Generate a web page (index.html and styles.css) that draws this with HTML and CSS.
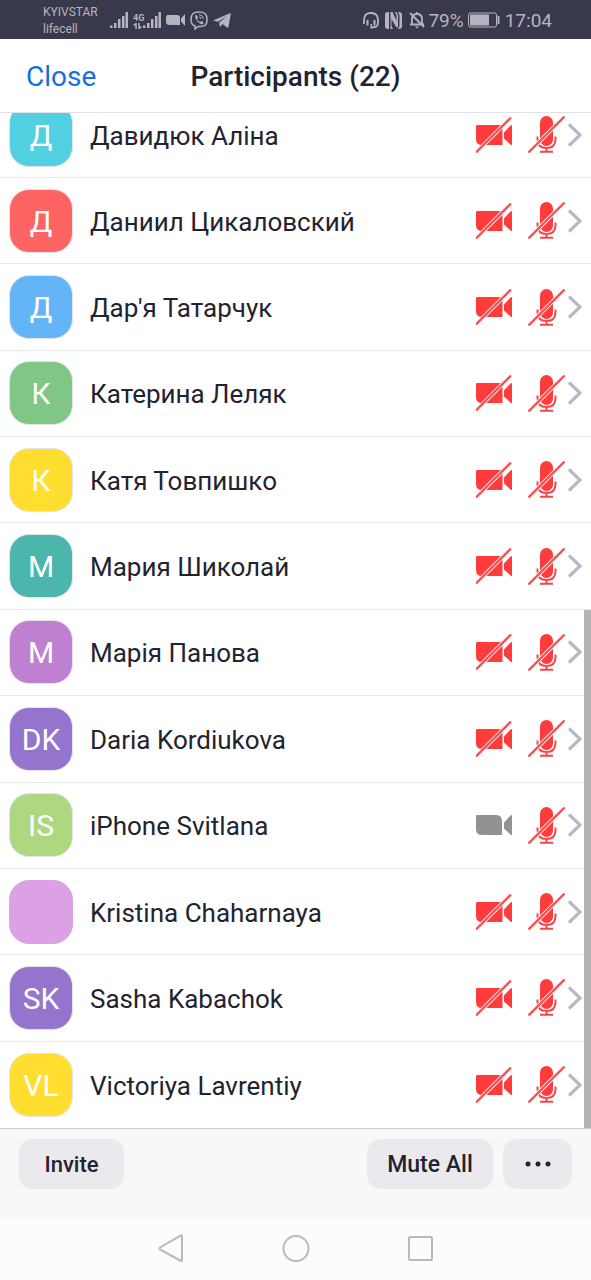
FILE: index.html
```html
<!DOCTYPE html>
<html lang="en">
<head>
<meta charset="utf-8">
<meta name="viewport" content="width=device-width, initial-scale=1">
<title>Participants</title>
<link rel="stylesheet" href="styles.css">
</head>
<body>
<svg class="sprite" aria-hidden="true">
  <symbol id="video-body" viewBox="0 0 36 36">
    <path d="M0 9Q0 8 1.500 8H20Q26 8 26 14V28H6Q0 28 0 22ZM28 15.500 34.500 8.500Q36 7.500 36 9V27.500Q36 29 34.500 27.500L28 21.500Z"/>
  </symbol>
  <symbol id="video-off" viewBox="0 0 36 36">
    <path d="M0 9Q0 8 1.500 8H26.500V28H6Q0 28 0 22ZM28 15.500 34.500 8.500Q36 7.500 36 9V27.500Q36 29 34.500 27.500L28 21.500Z"/>
    <path d="M0 35.500 35 .5" stroke="#ffe4e4" stroke-width="4"/>
    <path d="M0 35.500 35 .5" stroke="#ee4c50" stroke-width="2"/>
  </symbol>
  <symbol id="mic-off" viewBox="0 0 37 37">
    <rect x="12" y="0" width="13" height="30" rx="6.500"/>
    <path d="M9.500 20.500V23Q9.500 32 18.500 32T27.500 23V20.500M18.500 32V36M12 35.700H25" fill="none" stroke="#f2484a" stroke-width="2"/>
    <path d="M.5 36.500 36.500 .5" stroke="#ffe4e4" stroke-width="4"/>
    <path d="M.5 36.500 36.500 .5" stroke="#ee4c50" stroke-width="2"/>
  </symbol>
  <symbol id="chevron" viewBox="0 0 14 24">
    <path d="M1 1.500 12 12 1 22.500" fill="none" stroke="#b7b7c8" stroke-width="3.200"/>
  </symbol>
  <symbol id="signal" viewBox="0 0 18 18">
    <path d="M0 14.500h2.500v2.500H0ZM4 12h2.500v5H4ZM8 8h2.500v9H8ZM12 5h2.500v12h-2.500ZM15.500 1h2.500v16h-2.500Z"/>
  </symbol>
</svg>

<div class="screen">
  <div class="status">
    <div class="carriers"><span>KYIVSTAR</span><span>lifecell</span></div>
    <div class="status-icons">
      <svg class="signal" viewBox="0 0 18 18"><use href="#signal"/></svg>
      <div class="mobile">
        <div class="network"><span>4G</span>
          <svg viewBox="0 0 10 6"><path d="M3 6V.5L.5 2.500M6 0V5.500L8.500 3.500" fill="none" stroke="currentColor" stroke-width="1.500"/></svg>
        </div>
        <svg class="signal" viewBox="0 0 18 18"><use href="#signal"/></svg>
      </div>
      <svg class="camera" viewBox="0 0 19 12"><path d="M2 1H11Q14 1 14 4V11H4Q0 11 0 8V3Q0 1 2 1ZM15 4.500 19 0V12L15 7.500Z"/></svg>
      <svg class="viber" viewBox="0 0 18 19"><path d="M9 1C3 1 1 3 1 8.500 1 12 2 14 5 15V18L8 15.500C15 16 17 14 17 8.500S15 1 9 1Z" fill="none" stroke="currentColor" stroke-width="1.500"/><path d="M5 4.500 6.500 4 8 6.500 7 8Q8 10 10 11L11.500 10 13.500 11.500 13 13Q11 14 8 11T5 4.500Z"/><path d="M9 3.500Q13 4 13.500 8M9 6Q11 6 11 8" fill="none" stroke="currentColor"/></svg>
      <svg class="telegram" viewBox="0 0 18 15"><path d="M0 7.500 17 .3Q18 0 17.800 1L15.500 14Q15 15 14 14.500L9.500 11 7.500 13.500 6.500 13 6.300 9.500 14 3 5 8.800Z"/></svg>
    </div>
    <div class="status-right">
      <svg class="headset" viewBox="0 0 16 17"><path d="M1 12V8Q1 1 8 1T15 8V11Q15 15.500 9 15.500" fill="none" stroke="currentColor" stroke-width="1.800"/><path d="M3.500 8H5.500V13.500H3.500ZM10.500 8H12.500V13.500H10.500ZM7.500 12H9V16.500H7.500Z"/></svg>
      <svg class="nfc" viewBox="0 0 17 17"><path d="M3 0H4V17H3Q0 17 0 14V3Q0 0 3 0ZM5.500 0H7.500L11.500 9V3L10 0H11.500L13 3V15L11.500 15.500 6.500 7V14L8 17H5.500ZM14 0Q17 0 17 3V14Q17 17 14 17H13L14.500 14V3L13 0Z"/></svg>
      <svg class="bell" viewBox="0 0 16 18"><path d="M3 13V8Q3 3 8 3T13 8V13M1 13.500H15M8 1V3M1 2 15 16" fill="none" stroke="currentColor" stroke-width="1.800"/><path d="M6 15.500H10L8 17.500Z"/></svg>
      <span class="percent">79%</span>
      <svg class="battery" viewBox="0 0 32 16"><rect x=".5" y="1" width="28" height="14" rx="2" fill="none" stroke="currentColor"/><rect x="2" y="2.500" width="19" height="11"/><path d="M29.500 4H31.500V12H29.500Z"/></svg>
      <span class="time">17:04</span>
    </div>
  </div>

  <header class="header">
    <button class="close" type="button">Close</button>
    <h1 class="title">Participants (22)</h1>
  </header>

  <main class="list-area">
    <ul class="list">
      <li class="item item-clipped"><button class="row" type="button"><span class="avatar cyan">Д</span><span class="name">Давидюк Аліна</span><svg class="video"><use href="#video-off"/></svg><svg class="mic"><use href="#mic-off"/></svg><svg class="chevron"><use href="#chevron"/></svg></button></li>
      <li class="item"><button class="row" type="button"><span class="avatar red">Д</span><span class="name">Даниил Цикаловский</span><svg class="video"><use href="#video-off"/></svg><svg class="mic"><use href="#mic-off"/></svg><svg class="chevron"><use href="#chevron"/></svg></button></li>
      <li class="item"><button class="row" type="button"><span class="avatar blue">Д</span><span class="name">Дар'я Татарчук</span><svg class="video"><use href="#video-off"/></svg><svg class="mic"><use href="#mic-off"/></svg><svg class="chevron"><use href="#chevron"/></svg></button></li>
      <li class="item"><button class="row" type="button"><span class="avatar green">К</span><span class="name">Катерина Леляк</span><svg class="video"><use href="#video-off"/></svg><svg class="mic"><use href="#mic-off"/></svg><svg class="chevron"><use href="#chevron"/></svg></button></li>
      <li class="item"><button class="row" type="button"><span class="avatar yellow">К</span><span class="name">Катя Товпишко</span><svg class="video"><use href="#video-off"/></svg><svg class="mic"><use href="#mic-off"/></svg><svg class="chevron"><use href="#chevron"/></svg></button></li>
      <li class="item"><button class="row" type="button"><span class="avatar teal">М</span><span class="name">Мария Шиколай</span><svg class="video"><use href="#video-off"/></svg><svg class="mic"><use href="#mic-off"/></svg><svg class="chevron"><use href="#chevron"/></svg></button></li>
      <li class="item"><button class="row" type="button"><span class="avatar orchid">М</span><span class="name">Марія Панова</span><svg class="video"><use href="#video-off"/></svg><svg class="mic"><use href="#mic-off"/></svg><svg class="chevron"><use href="#chevron"/></svg></button></li>
      <li class="item"><button class="row" type="button"><span class="avatar purple">DK</span><span class="name">Daria Kordiukova</span><svg class="video"><use href="#video-off"/></svg><svg class="mic"><use href="#mic-off"/></svg><svg class="chevron"><use href="#chevron"/></svg></button></li>
      <li class="item"><button class="row" type="button"><span class="avatar lime">IS</span><span class="name">iPhone Svitlana</span><svg class="video video-on"><use href="#video-body"/></svg><svg class="mic"><use href="#mic-off"/></svg><svg class="chevron"><use href="#chevron"/></svg></button></li>
      <li class="item"><button class="row" type="button"><span class="avatar pink"></span><span class="name">Kristina Chaharnaya</span><svg class="video"><use href="#video-off"/></svg><svg class="mic"><use href="#mic-off"/></svg><svg class="chevron"><use href="#chevron"/></svg></button></li>
      <li class="item"><button class="row" type="button"><span class="avatar purple">SK</span><span class="name">Sasha Kabachok</span><svg class="video"><use href="#video-off"/></svg><svg class="mic"><use href="#mic-off"/></svg><svg class="chevron"><use href="#chevron"/></svg></button></li>
      <li class="item"><button class="row" type="button"><span class="avatar yellow">VL</span><span class="name">Victoriya Lavrentiy</span><svg class="video"><use href="#video-off"/></svg><svg class="mic"><use href="#mic-off"/></svg><svg class="chevron"><use href="#chevron"/></svg></button></li>
    </ul>
    <div class="scrollbar"></div>
  </main>

  <footer class="actions">
    <button class="action" type="button">Invite</button>
    <button class="action action-mute" type="button">Mute All</button>
    <button class="action action-more" type="button" aria-label="More"><svg class="dots" viewBox="0 0 26 6"><circle cx="3" cy="3" r="2.500"/><circle cx="13" cy="3" r="2.500"/><circle cx="23" cy="3" r="2.500"/></svg></button>
  </footer>

  <nav class="system-nav">
    <button class="nav-button" type="button" aria-label="Back"><svg viewBox="0 0 28 28"><path d="M25 2.500V26Q25 27.500 24 27L3 15.500Q2 14.500 3 13.500L24 1.500Q25 1 25 2.500Z"/></svg></button>
    <button class="nav-button" type="button" aria-label="Home"><svg viewBox="0 0 28 28"><circle cx="14" cy="14.500" r="12.500"/></svg></button>
    <button class="nav-button" type="button" aria-label="Recent apps"><svg viewBox="0 0 28 28"><rect x="2" y="3" width="23" height="23" rx="1"/></svg></button>
  </nav>
</div>
</body>
</html>
```

FILE: styles.css
```css
* {
  box-sizing: border-box;
}

body {
  margin: 0;
  background: #fff;
  color: #23232f;
  font-family: Roboto, "Noto Sans", sans-serif;
}

button {
  margin: 0;
  padding: 0;
  border: 0;
  background: none;
  color: inherit;
  font: inherit;
}

svg {
  display: block;
  flex: none;
}

.sprite {
  display: none;
}

.screen {
  display: flex;
  flex-direction: column;
  min-height: 100vh;
}

/* Status bar */
.status {
  display: flex;
  align-items: center;
  height: 39px;
  padding: 0 39px 0 43px;
  background: #39394d;
  color: #b5b5bf;
}

.status svg {
  fill: currentColor;
}

.carriers {
  display: flex;
  flex-direction: column;
  width: 67px;
  padding-top: 2px;
  font-size: 12px;
  line-height: 17px;
}

.status-icons {
  display: flex;
  align-items: center;
  gap: 5px;
  padding-top: 1px;
}

.signal {
  width: 18px;
  height: 18px;
}

.mobile {
  display: flex;
  align-items: flex-end;
}

.network {
  display: flex;
  flex-direction: column;
  width: 10px;
  font-size: 9px;
  font-weight: 700;
  line-height: 10px;
}

.network svg {
  width: 10px;
  height: 6px;
}

.camera {
  width: 19px;
  height: 12px;
}

.viber {
  width: 18px;
  height: 19px;
}

.telegram {
  width: 18px;
  height: 15px;
}

.status-right {
  display: flex;
  align-items: center;
  margin-left: auto;
  padding-top: 1px;
}

.headset {
  width: 16px;
  height: 17px;
  margin-right: 6px;
}

.nfc {
  width: 17px;
  height: 17px;
  margin-right: 7px;
}

.bell {
  width: 16px;
  height: 18px;
  margin-right: 3px;
}

.percent {
  margin-right: 4px;
  font-size: 19px;
}

.battery {
  width: 32px;
  height: 16px;
  margin-right: 5px;
}

.time {
  font-size: 19px;
}

/* Title bar */
.header {
  display: grid;
  grid-template-columns: 1fr auto 1fr;
  align-items: center;
  height: 74px;
  padding: 2px 26px 0;
  border-bottom: 1px solid #e2e2e5;
}

.close {
  justify-self: start;
  color: #1470e0;
  font-size: 28px;
}

.title {
  margin: 0;
  font-size: 28px;
  font-weight: 500;
}

/* Participants */
.list-area {
  position: relative;
  display: flex;
  flex: 1;
}

.list {
  display: flex;
  flex: 1;
  flex-direction: column;
  margin: 0;
  padding: 0;
  list-style: none;
}

.item {
  display: flex;
  flex: 1 0 86px;
  border-bottom: 1px solid #eaeaed;
}

.item:last-child {
  border-bottom: 0;
}

.item-clipped {
  flex: 0 0 65px;
  align-items: flex-end;
  overflow: hidden;
}

.row {
  display: flex;
  flex: 1;
  align-items: center;
  min-height: 85px;
  padding: 0 9px;
  text-align: left;
}

.avatar {
  display: grid;
  flex: none;
  place-items: center;
  width: 64px;
  height: 64px;
  padding-top: 2px;
  border: 1px solid #e4e4ea;
  border-radius: 20px;
  color: #fff;
  font-size: 30px;
  line-height: 1;
}

.name {
  flex: 1;
  padding: 2px 0 0 17px;
  font-size: 26px;
}

.cyan { background: #50d0e0; }
.red { background: #ff6464; }
.blue { background: #64b4f8; }
.green { background: #80c785; }
.yellow { background: #ffde30; }
.teal { background: #4cb6ac; }
.orchid { background: #c080d2; }
.purple { background: #9474cc; }
.lime { background: #aed880; }

.pink {
  border-color: #dca0e4;
  background: #dca0e4;
}

.video {
  width: 36px;
  height: 36px;
  margin-right: 16px;
  fill: #ff3b3b;
}

.video-on {
  fill: #929292;
}

.mic {
  width: 37px;
  height: 37px;
  margin-right: 3px;
  fill: #ff3b3b;
}

.chevron {
  width: 14px;
  height: 24px;
}

.scrollbar {
  position: absolute;
  right: 0;
  bottom: 0;
  width: 7px;
  height: 51%;
  background: #b4b4b4;
}

/* Bottom actions */
.actions {
  display: flex;
  align-items: flex-start;
  gap: 10px;
  height: 89px;
  padding: 10px 19px;
  border-top: 1px solid #cdcdd0;
  background: #f8f8f8;
}

.action {
  display: grid;
  place-items: center;
  width: 105px;
  height: 50px;
  border-radius: 14px;
  background: #eaeaee;
  font-size: 22px;
  font-weight: 500;
}

.action-mute {
  width: 126px;
  margin-left: auto;
  font-size: 23px;
}

.action-more {
  width: 69px;
}

.dots {
  width: 26px;
  height: 6px;
  fill: #23232f;
}

/* System navigation */
.system-nav {
  display: flex;
  justify-content: center;
  gap: 97px;
  height: 63px;
  padding-top: 17px;
  background: #fcfcfc;
}

.nav-button {
  width: 28px;
  height: 28px;
}

.nav-button svg {
  width: 28px;
  height: 28px;
  fill: none;
  stroke: #b9b9b9;
  stroke-width: 2;
}
```
